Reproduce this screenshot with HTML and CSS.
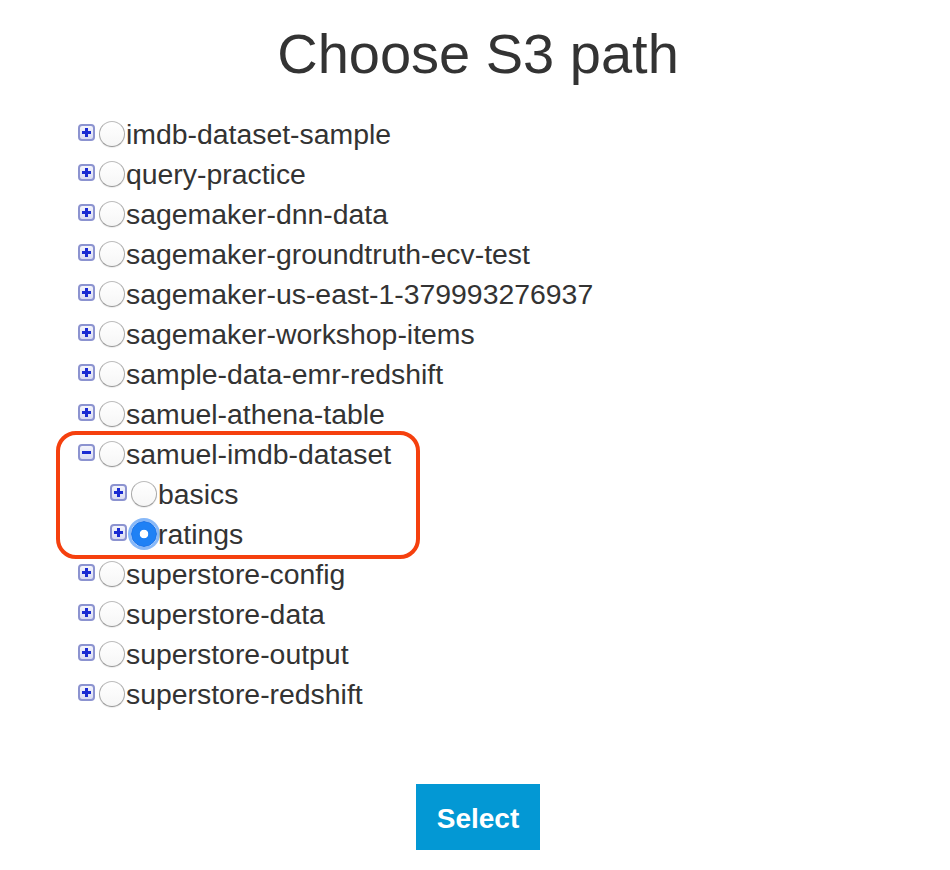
FILE: index.html
```html
<!DOCTYPE html>
<html>
<head>
<meta charset="utf-8">
<title>Choose S3 path</title>
<link rel="stylesheet" href="styles.css">
</head>
<body>
<div class="page">
  <h1 class="title">Choose S3 path</h1>
  <ul class="tree">
    <li class="node"><span class="toggle plus"></span><span class="radio"></span><span class="label">imdb-dataset-sample</span></li>
    <li class="node"><span class="toggle plus"></span><span class="radio"></span><span class="label">query-practice</span></li>
    <li class="node"><span class="toggle plus"></span><span class="radio"></span><span class="label">sagemaker-dnn-data</span></li>
    <li class="node"><span class="toggle plus"></span><span class="radio"></span><span class="label">sagemaker-groundtruth-ecv-test</span></li>
    <li class="node"><span class="toggle plus"></span><span class="radio"></span><span class="label">sagemaker-us-east-1-379993276937</span></li>
    <li class="node"><span class="toggle plus"></span><span class="radio"></span><span class="label">sagemaker-workshop-items</span></li>
    <li class="node"><span class="toggle plus"></span><span class="radio"></span><span class="label">sample-data-emr-redshift</span></li>
    <li class="node"><span class="toggle plus"></span><span class="radio"></span><span class="label">samuel-athena-table</span></li>
    <li class="group highlighted">
      <div class="node"><span class="toggle minus"></span><span class="radio"></span><span class="label">samuel-imdb-dataset</span></div>
      <ul class="children">
        <li class="node"><span class="toggle plus"></span><span class="radio"></span><span class="label">basics</span></li>
        <li class="node"><span class="toggle plus"></span><span class="radio checked"></span><span class="label">ratings</span></li>
      </ul>
    </li>
    <li class="node"><span class="toggle plus"></span><span class="radio"></span><span class="label">superstore-config</span></li>
    <li class="node"><span class="toggle plus"></span><span class="radio"></span><span class="label">superstore-data</span></li>
    <li class="node"><span class="toggle plus"></span><span class="radio"></span><span class="label">superstore-output</span></li>
    <li class="node"><span class="toggle plus"></span><span class="radio"></span><span class="label">superstore-redshift</span></li>
  </ul>
  <div class="actions">
    <button class="select-btn">Select</button>
  </div>
</div>
</body>
</html>
```

FILE: styles.css
```css
html, body {
  margin: 0;
  padding: 0;
  background: #ffffff;
}

body {
  font-family: "Liberation Sans", Arial, Helvetica, sans-serif;
  color: #333333;
}

.page {
  padding-left: 6px;
}

.title {
  margin: 22px 0 0 0;
  font-size: 56px;
  line-height: 64px;
  font-weight: normal;
  text-align: center;
  color: #333333;
}

.tree,
.children {
  list-style: none;
  margin: 0;
  padding: 0;
}

.tree {
  margin-top: 28px;
  padding-left: 72px;
}

.children {
  padding-left: 32px;
}

.node {
  display: flex;
  align-items: center;
  height: 40px;
}

.toggle {
  position: relative;
  flex: none;
  width: 17px;
  height: 17px;
  box-sizing: border-box;
  border: 2px solid #8c93d0;
  border-radius: 4px;
  background: linear-gradient(#f4f5fc, #dadcf2);
  margin-top: -4px;
  margin-right: 4px;
}

.toggle::before,
.toggle::after {
  content: "";
  position: absolute;
  background: #1a2bd2;
}

.toggle::before {
  left: 2px;
  right: 2px;
  top: 5px;
  height: 3px;
}

.plus::after {
  top: 2px;
  bottom: 2px;
  left: 5px;
  width: 3px;
}

.radio {
  flex: none;
  width: 26px;
  height: 26px;
  box-sizing: border-box;
  border: 1px solid #a8a8a8;
  border-top-color: #bdbdbd;
  border-bottom-color: #9a9a9a;
  border-radius: 50%;
  background: linear-gradient(#ffffff, #f6f6f6);
  box-shadow: 0 1px 1px rgba(0, 0, 0, 0.08);
  margin-right: 1px;
}

.radio.checked {
  border: 1px solid #1a72e8;
  background: radial-gradient(circle, #ffffff 0, #ffffff 4px, #1f81f5 4.6px);
  box-shadow: 0 0 0 3px rgba(95, 160, 245, 0.75);
}

.label {
  font-size: 28.4px;
  line-height: 40px;
  white-space: nowrap;
  color: #333333;
}

.group {
  position: relative;
}

.highlighted::before {
  content: "";
  position: absolute;
  left: -22px;
  top: -3px;
  width: 364px;
  height: 128px;
  box-sizing: border-box;
  border: 4px solid #f5400e;
  border-radius: 20px;
  pointer-events: none;
}

.actions {
  display: flex;
  justify-content: center;
  margin-top: 70px;
}

.select-btn {
  width: 124px;
  height: 66px;
  border: none;
  border-radius: 0;
  background: #0398d4;
  color: #ffffff;
  font-family: "Liberation Sans", Arial, Helvetica, sans-serif;
  font-size: 28px;
  font-weight: bold;
  padding: 3px 0 0 0;
}
```
